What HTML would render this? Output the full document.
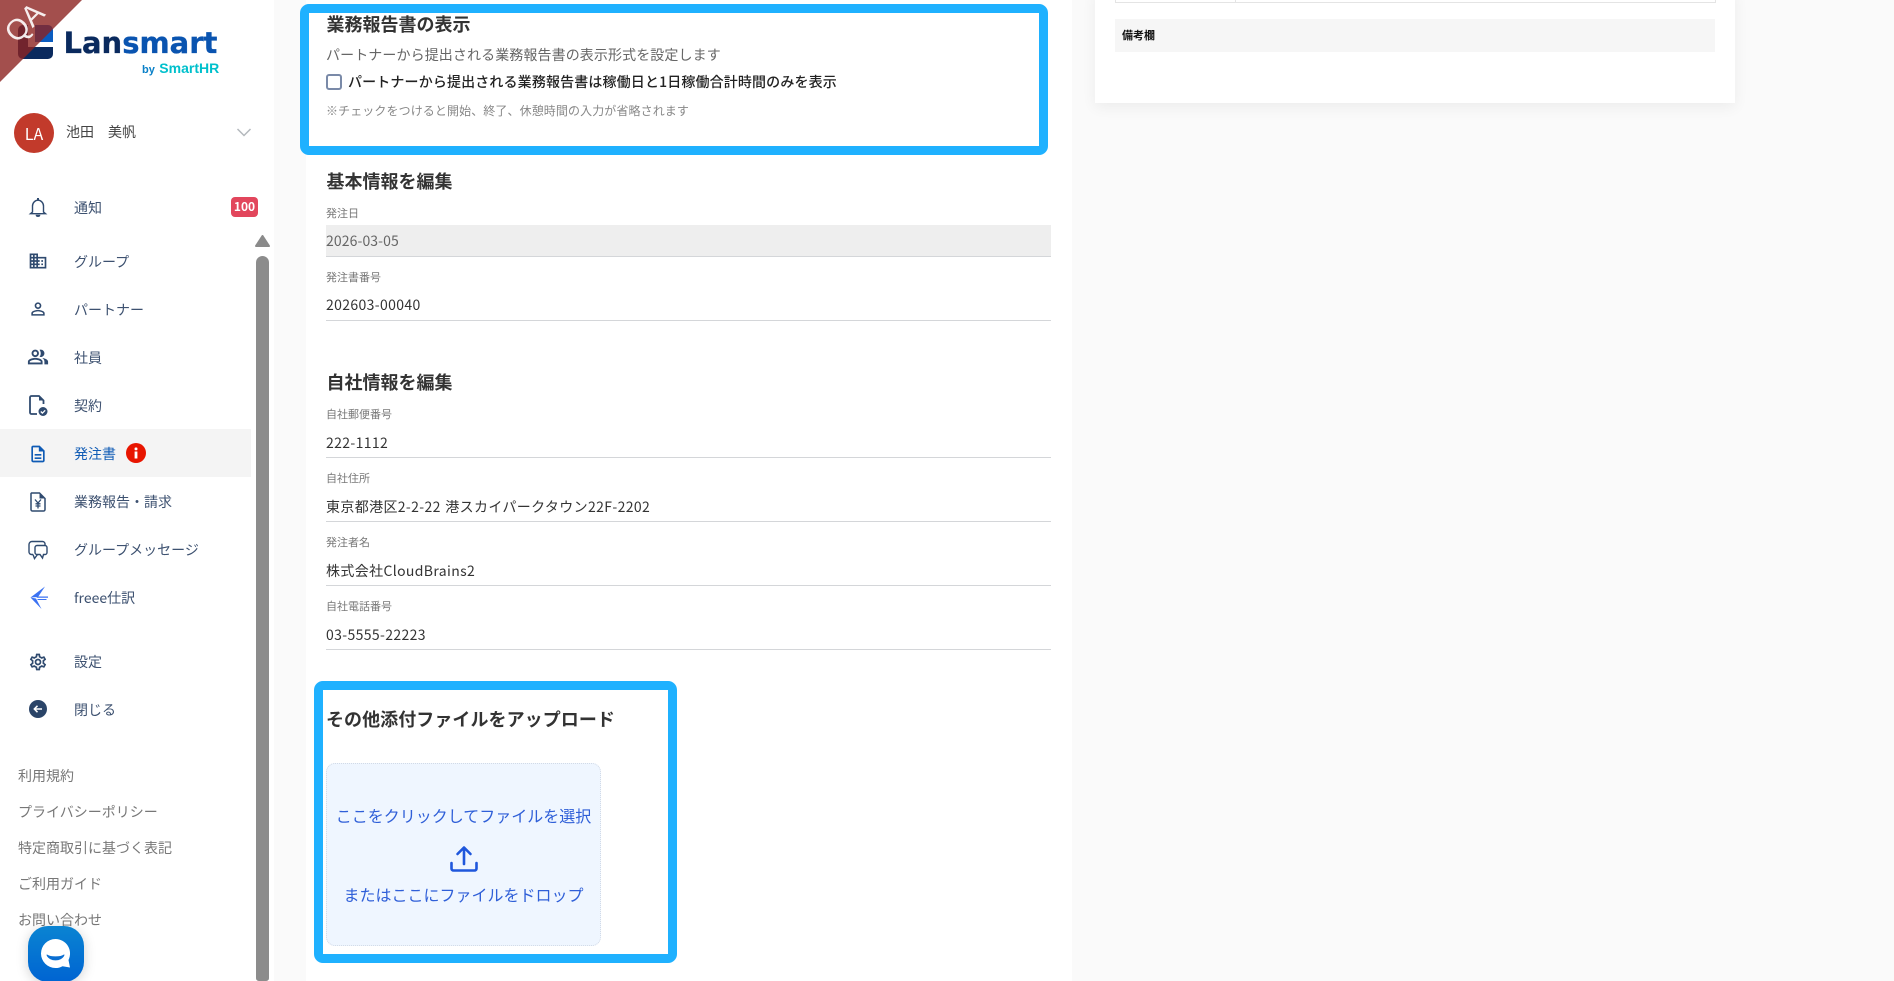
<!DOCTYPE html>
<html lang="ja">
<head>
<meta charset="utf-8">
<title>Lansmart</title>
<style>
html,body{margin:0;padding:0;width:1894px;height:981px;overflow:hidden;background:#fafafa;}
body{position:relative;font-family:"Noto Sans CJK JP","Liberation Sans",sans-serif;color:#333;}
.a{position:absolute;}
.t{position:absolute;white-space:nowrap;line-height:20px;}
.nav{font-size:14px;color:#3d5170;left:74px;letter-spacing:0;}
.foot{font-size:14px;color:#777;left:18px;}
.h{font-size:18px;font-weight:700;color:#333;left:326.500px;line-height:24px;}
.lab{font-size:11px;color:#777;left:326px;}
.val{font-size:14px;color:#333;left:326px;letter-spacing:.36px;}
.line{position:absolute;left:326px;width:725px;height:1px;background:#d4d6d9;}
.ic{position:absolute;fill:#2f4a6f;}
</style>
</head>
<body>
<!-- sidebar -->
<div class="a" style="left:0;top:0;width:274px;height:981px;background:#fff;"></div>
<div class="a" style="left:0;top:429px;width:251px;height:48px;background:#f4f4f4;"></div>

<!-- logo -->
<svg class="a" style="left:18px;top:25px" width="36" height="35" viewBox="0 0 36 35">
<path d="M0 5a5 5 0 0 1 5-5h5v22h25v7a5 5 0 0 1-5 5H5a5 5 0 0 1-5-5z" fill="#0a2a5e"/>
<path d="M17 0h13a5 5 0 0 1 5 5v12H17z" fill="#0a5cc0"/>
</svg>
<div class="t" style="left:63.500px;top:25px;font-family:'DejaVu Sans',sans-serif;font-weight:700;font-size:29px;line-height:36px;-webkit-text-stroke:.3px;"><span style="color:#0a2a5e">Lan</span><span style="color:#0a54b0">smart</span></div>
<div class="t" style="left:142px;top:59px;font-family:'Liberation Sans',sans-serif;font-weight:700;line-height:18px;white-space:nowrap;"><span style="font-size:11px;color:#0a80c8;">by</span> <span style="font-size:14px;color:#00c0cc;">SmartHR</span></div>

<!-- QA ribbon -->
<svg class="a" style="left:0;top:0" width="90" height="90"><polygon points="0,0 82,0 0,82" fill="#8c2320" fill-opacity=".8"/></svg>
<div class="t" style="left:0;top:9px;width:50px;text-align:center;color:#fff;font-family:'Liberation Sans',sans-serif;font-size:29px;line-height:28px;transform:rotate(-45deg);opacity:.9;">QA</div>

<!-- user -->
<div class="a" style="left:14px;top:113px;width:40px;height:40px;border-radius:50%;background:#c23a2b;color:#fff;font-size:16px;line-height:40px;text-align:center;">LA</div>
<div class="t" style="left:66px;top:122px;font-size:14px;color:#444;">池田　美帆</div>
<svg class="a" style="left:236px;top:127px" width="16" height="11" viewBox="0 0 16 11"><path d="M1.500 2 8 8.500 14.500 2" fill="none" stroke="#b4b8bd" stroke-width="1.500"/></svg>

<!-- nav -->
<svg class="a" style="left:26px;top:195px" width="24" height="24" viewBox="0 0 24 24" fill="none" stroke="#2f4a6f" stroke-width="1.400"><path d="M6.500 17v-6c0-3 2.400-5.800 5.500-5.800s5.500 2.800 5.500 5.800v6l2 1.700H4.500z"/><path d="M12 3v2" stroke-width="2"/><path d="M10.500 20.500c.3 1 2.700 1 3 0z" fill="#2f4a6f"/></svg>
<div class="t nav" style="top:198px">通知</div>
<div class="a" style="left:231px;top:197px;width:27px;height:20px;border-radius:4px;background:#e2465c;color:#fff;font-size:12px;font-weight:700;line-height:20px;text-align:center;">100</div>

<svg class="ic" style="left:28px;top:251px" width="20" height="20" viewBox="0 0 24 24"><path d="M12 7V3H2v18h20V7H12zM6 19H4v-2h2v2zm0-4H4v-2h2v2zm0-4H4V9h2v2zm0-4H4V5h2v2zm4 12H8v-2h2v2zm0-4H8v-2h2v2zm0-4H8V9h2v2zm0-4H8V5h2v2zm10 12h-8v-2h2v-2h-2v-2h2v-2h-2V9h8v10zm-2-8h-2v2h2v-2zm0 4h-2v2h2v-2z"/></svg>
<div class="t nav" style="top:252px">グループ</div>

<svg class="ic" style="left:28px;top:299px" width="20" height="20" viewBox="0 0 24 24"><path d="M12 5.900c1.160 0 2.100.94 2.100 2.100s-.94 2.100-2.100 2.100S9.900 9.160 9.900 8s.94-2.100 2.100-2.100m0 9c2.970 0 6.100 1.460 6.100 2.100v1.100H5.900V17c0-.64 3.130-2.100 6.100-2.100M12 4C9.790 4 8 5.790 8 8s1.790 4 4 4 4-1.790 4-4-1.790-4-4-4zm0 9c-2.670 0-8 1.340-8 4v3h16v-3c0-2.660-5.330-4-8-4z"/></svg>
<div class="t nav" style="top:300px">パートナー</div>

<svg class="ic" style="left:27px;top:346px" width="22" height="22" viewBox="0 0 24 24"><path d="M16.670 13.130C18.040 14.060 19 15.320 19 17v3h4v-3c0-2.180-3.570-3.470-6.330-3.870zM15 12c2.210 0 4-1.790 4-4s-1.790-4-4-4c-.47 0-.91.1-1.330.24C14.500 5.270 15 6.580 15 8s-.5 2.730-1.330 3.760c.42.14.86.24 1.330.24zM9 12c2.210 0 4-1.790 4-4s-1.790-4-4-4-4 1.790-4 4 1.790 4 4 4zm0-6c1.100 0 2 .9 2 2s-.9 2-2 2-2-.9-2-2 .9-2 2-2zM9 13c-2.670 0-8 1.340-8 4v3h16v-3c0-2.660-5.330-4-8-4zm6 5H3v-.99C3.200 16.290 6.300 15 9 15s5.800 1.290 6 2v1z"/></svg>
<div class="t nav" style="top:348px">社員</div>

<svg class="a" style="left:28px;top:394px" width="20" height="24" viewBox="0 0 20 24">
<path d="M9 20H3.500A1.500 1.500 0 0 1 2 18.500V3.500A1.500 1.500 0 0 1 3.500 2H11l4.500 4.500V10" fill="none" stroke="#2f4a6f" stroke-width="1.800"/>
<path d="M11 2v4.500h4.500z" fill="#2f4a6f"/>
<circle cx="15" cy="17.500" r="4.500" fill="#2f4a6f"/>
<path d="M12.800 17.500l1.600 1.600 2.800-2.800" fill="none" stroke="#fff" stroke-width="1.300"/>
</svg>
<div class="t nav" style="top:396px">契約</div>

<svg class="ic" style="left:28px;top:444px;fill:#0f5bb5" width="20" height="20" viewBox="0 0 24 24"><path d="M8 16h8v2H8zm0-4h8v2H8zm6-10H6c-1.100 0-2 .9-2 2v16c0 1.100.89 2 1.990 2H18c1.100 0 2-.9 2-2V8l-6-6zm4 18H6V4h7v5h5v11z"/></svg>
<div class="t nav" style="top:444px;color:#0f5bb5">発注書</div>
<div class="a" style="left:126px;top:443px;width:20px;height:20px;border-radius:50%;background:#e81500;"></div>
<svg class="a" style="left:126px;top:443px" width="20" height="20"><rect x="8.600" y="4.500" width="2.800" height="2.800" rx=".8" fill="#fff"/><rect x="8.600" y="8.500" width="2.800" height="7" fill="#fff"/></svg>

<svg class="a" style="left:28px;top:491px" width="20" height="22" viewBox="0 0 20 22">
<path d="M3.500 2H11.500L17 7.500V18.500A1.500 1.500 0 0 1 15.500 20H4.500A1.500 1.500 0 0 1 3 18.500V2.500z" fill="none" stroke="#2f4a6f" stroke-width="1.500"/>
<path d="M11.500 2v5.500H17z" fill="#2f4a6f"/>
<path d="M7 8.500l3 3.500 3-3.500M10 12v5.500M7.500 12.800h5M7.500 15h5" fill="none" stroke="#2f4a6f" stroke-width="1.300"/>
</svg>
<div class="t nav" style="top:492px">業務報告・請求</div>

<svg class="a" style="left:28px;top:540px" width="20" height="20" viewBox="0 0 20 20">
<path d="M5 14.500H3.500A2.500 2.500 0 0 1 1 12V4.500A3 3 0 0 1 4 1.500h10.500A2.500 2.500 0 0 1 17 4v1M5 14.500l1.500 4 3-4" fill="none" stroke="#2f4a6f" stroke-width="1.400"/>
<path d="M7 7.500A2 2 0 0 1 9 5.500h8a2 2 0 0 1 2 2v5a2 2 0 0 1-2 2h-1.500l-1 3.500-2.500-3.500H9a2 2 0 0 1-2-2z" fill="#fff" stroke="#2f4a6f" stroke-width="1.400"/>
</svg>
<div class="t nav" style="top:540px">グループメッセージ</div>

<svg class="a" style="left:29px;top:586px" width="20" height="24" viewBox="0 0 20 24">
<path d="M1.500 11.500 16 .5 9 11z" fill="#3b72f2"/>
<path d="M1.500 11.500 12.500 23 7 12.500z" fill="#3b72f2"/>
<path d="M7 10.500h12v1.200H8zM8 13h9.500v1H9z" fill="#3b72f2"/>
</svg>
<div class="t nav" style="top:588px">freee仕訳</div>

<svg class="ic" style="left:28px;top:652px" width="20" height="20" viewBox="0 0 24 24"><path d="M19.430 12.980c.04-.32.07-.64.07-.98 0-.34-.03-.66-.07-.98l2.110-1.650c.19-.15.24-.42.12-.64l-2-3.460c-.09-.16-.26-.25-.44-.25-.06 0-.12.01-.17.03l-2.490 1c-.52-.4-1.080-.73-1.690-.98l-.38-2.650C14.460 2.180 14.250 2 14 2h-4c-.25 0-.46.18-.49.42l-.38 2.650c-.61.25-1.170.59-1.690.98l-2.490-1c-.06-.02-.12-.03-.18-.03-.17 0-.34.09-.43.25l-2 3.460c-.13.22-.07.49.12.64l2.110 1.650c-.04.32-.07.65-.07.98 0 .33.03.66.07.98l-2.110 1.650c-.19.15-.24.42-.12.64l2 3.460c.09.16.26.25.44.25.06 0 .12-.01.17-.03l2.490-1c.52.4 1.080.73 1.690.98l.38 2.650c.03.24.24.42.49.42h4c.25 0 .46-.18.49-.42l.38-2.650c.61-.25 1.170-.59 1.690-.98l2.490 1c.06.02.12.03.18.03.17 0 .34-.09.43-.25l2-3.460c.12-.22.07-.49-.12-.64l-2.110-1.650zm-1.980-1.710c.04.31.05.52.05.73 0 .21-.02.43-.05.73l-.14 1.130.89.7 1.080.84-.7 1.210-1.270-.51-1.040-.42-.9.68c-.43.32-.84.56-1.250.73l-1.060.43-.16 1.130-.2 1.350h-1.400l-.19-1.350-.16-1.130-1.060-.43c-.43-.18-.83-.41-1.230-.71l-.91-.7-1.060.43-1.270.51-.7-1.210 1.080-.84.89-.7-.14-1.130c-.03-.31-.05-.54-.05-.74s.02-.43.05-.73l.14-1.130-.89-.7-1.080-.84.7-1.210 1.270.51 1.040.42.9-.68c.43-.32.84-.56 1.250-.73l1.060-.43.16-1.130.2-1.350h1.390l.19 1.350.16 1.130 1.060.43c.43.18.83.41 1.230.71l.91.7 1.060-.43 1.270-.51.7 1.210-1.070.85-.89.7.14 1.130zM12 8c-2.210 0-4 1.790-4 4s1.790 4 4 4 4-1.790 4-4-1.790-4-4-4zm0 6c-1.100 0-2-.9-2-2s.9-2 2-2 2 .9 2 2-.9 2-2 2z"/></svg>
<div class="t nav" style="top:652px">設定</div>

<svg class="a" style="left:29px;top:700px" width="18" height="18" viewBox="0 0 18 18"><circle cx="9" cy="9" r="9" fill="#2a4468"/><path d="M13 9H5.500M8.500 5.800 5.300 9l3.200 3.200" fill="none" stroke="#fff" stroke-width="1.500"/></svg>
<div class="t nav" style="top:700px">閉じる</div>

<div class="t foot" style="top:766px">利用規約</div>
<div class="t foot" style="top:802px">プライバシーポリシー</div>
<div class="t foot" style="top:838px">特定商取引に基づく表記</div>
<div class="t foot" style="top:874px">ご利用ガイド</div>
<div class="t foot" style="top:910px">お問い合わせ</div>

<!-- scrollbar -->
<svg class="a" style="left:254px;top:234px" width="17" height="14"><polygon points="8.500,2 15,12 2,12" fill="#8a8a8a" stroke="#8a8a8a" stroke-width="2" stroke-linejoin="round"/></svg>
<div class="a" style="left:256px;top:256px;width:13px;height:725px;background:#8c8c8c;border-radius:7px 7px 3px 3px;"></div>

<!-- chat widget -->
<div class="a" style="left:28px;top:926px;width:56px;height:56px;border-radius:20px;background:linear-gradient(180deg,#0a84d2,#0064d2);box-shadow:0 2px 12px rgba(0,0,0,.18);"></div>
<svg class="a" style="left:28px;top:926px" width="56" height="55" viewBox="0 0 56 55">
<path d="M27.500 13a14.500 14.500 0 1 0 0 29c2.500 0 5-.6 7-1.800L42 41.500l-1.500-7.500A14.500 14.500 0 0 0 27.500 13z" fill="#fff"/>
<path d="M19 29c2.500 6.500 14.500 6.500 17 0-3.500 2.500-13.500 2.500-17 0z" fill="#0a6ed2" stroke="#0a6ed2" stroke-width="1" stroke-linejoin="round"/>
</svg>

<!-- main panel -->
<div class="a" style="left:306px;top:0;width:766px;height:981px;background:#fff;"></div>

<div class="t h" style="top:12px">業務報告書の表示</div>
<div class="t" style="left:326px;top:45px;font-size:14px;color:#666;letter-spacing:.1px;">パートナーから提出される業務報告書の表示形式を設定します</div>
<div class="a" style="left:326px;top:74px;width:12px;height:12px;border:2px solid #7a8aa8;border-radius:3px;background:#fff;"></div>
<div class="t" style="left:348px;top:72px;font-size:14px;font-weight:500;color:#222;letter-spacing:.14px;">パートナーから提出される業務報告書は稼働日と1日稼働合計時間のみを表示</div>
<div class="t" style="left:326px;top:100.500px;font-size:12px;color:#888;letter-spacing:.1px;">※チェックをつけると開始、終了、休憩時間の入力が省略されます</div>

<div class="a" style="left:300px;top:4px;width:730px;height:133px;border:9px solid #1fb1ff;border-radius:9px;"></div>

<div class="t h" style="top:169px">基本情報を編集</div>
<div class="t lab" style="top:203px">発注日</div>
<div class="a" style="left:326px;top:225px;width:725px;height:31px;background:#eee;"></div>
<div class="t val" style="top:231px;color:#666;letter-spacing:.1px">2026-03-05</div>
<div class="line" style="top:256px"></div>
<div class="t lab" style="top:267px">発注書番号</div>
<div class="t val" style="top:295px">202603-00040</div>
<div class="line" style="top:320px"></div>

<div class="t h" style="top:370px">自社情報を編集</div>
<div class="t lab" style="top:404px">自社郵便番号</div>
<div class="t val" style="top:433px">222-1112</div>
<div class="line" style="top:457px"></div>
<div class="t lab" style="top:468px">自社住所</div>
<div class="t val" style="top:497px;word-spacing:1px">東京都港区2-2-22 港スカイパークタウン22F-2202</div>
<div class="line" style="top:521px"></div>
<div class="t lab" style="top:532px">発注者名</div>
<div class="t val" style="top:561px">株式会社CloudBrains2</div>
<div class="line" style="top:585px"></div>
<div class="t lab" style="top:596px">自社電話番号</div>
<div class="t val" style="top:625px">03-5555-22223</div>
<div class="line" style="top:649px"></div>

<div class="t h" style="top:707px;left:326px;letter-spacing:.06px">その他添付ファイルをアップロード</div>
<div class="a" style="left:326px;top:763px;width:273px;height:181px;background:#eff6ff;border:1px dotted #d2dae6;border-radius:9px;"></div>
<div class="t" style="left:326px;width:275px;text-align:center;top:805px;font-size:16px;color:#2f5fd8;">ここをクリックしてファイルを選択</div>
<svg class="a" style="left:449px;top:845px" width="30" height="28" viewBox="0 0 30 28"><path d="M15 19V3M8.500 9 15 2.500 21.500 9M2.500 18v5.500a2 2 0 0 0 2 2h21a2 2 0 0 0 2-2V18" fill="none" stroke="#1f57dc" stroke-width="2.600" stroke-linecap="round" stroke-linejoin="round"/></svg>
<div class="t" style="left:326px;width:275px;text-align:center;top:884px;font-size:16px;color:#2f5fd8;">またはここにファイルをドロップ</div>

<div class="a" style="left:314px;top:681px;width:345px;height:264px;border:9px solid #1fb1ff;border-radius:9px;"></div>

<!-- right panel -->
<div class="a" style="left:1095px;top:-10px;width:640px;height:113px;background:#fff;box-shadow:0 4px 14px rgba(0,0,0,.06);"></div>
<div class="a" style="left:1115px;top:-10px;width:599px;height:11px;border:1px solid #e4e4e4;"></div>
<div class="a" style="left:1235px;top:0;width:1px;height:2px;background:#e4e4e4;"></div>
<div class="a" style="left:1115px;top:19px;width:600px;height:33px;background:#f6f6f6;"></div>
<div class="t" style="left:1122px;top:25px;font-size:11px;font-weight:700;color:#111;">備考欄</div>
</body>
</html>
